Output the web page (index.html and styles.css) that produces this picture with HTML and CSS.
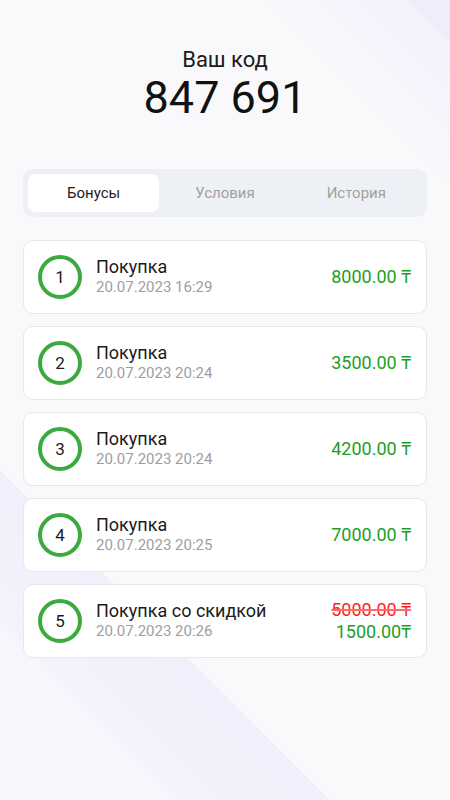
FILE: index.html
```html
<!DOCTYPE html>
<html lang="ru">
<head>
<meta charset="utf-8">
<title>Ваш код</title>
<link rel="stylesheet" href="styles.css">
</head>
<body>
<div class="page">
  <header class="header">
    <div class="header-label">Ваш код</div>
    <div class="header-code">847 691</div>
  </header>

  <nav class="tabs">
    <div class="tab tab-active">Бонусы</div>
    <div class="tab">Условия</div>
    <div class="tab">История</div>
  </nav>

  <ul class="list">
    <li class="card">
      <div class="badge">1</div>
      <div class="info">
        <div class="title">Покупка</div>
        <div class="date">20.07.2023 16:29</div>
      </div>
      <div class="amounts"><div class="amount">8000.00 ₸</div></div>
    </li>
    <li class="card">
      <div class="badge">2</div>
      <div class="info">
        <div class="title">Покупка</div>
        <div class="date">20.07.2023 20:24</div>
      </div>
      <div class="amounts"><div class="amount">3500.00 ₸</div></div>
    </li>
    <li class="card">
      <div class="badge">3</div>
      <div class="info">
        <div class="title">Покупка</div>
        <div class="date">20.07.2023 20:24</div>
      </div>
      <div class="amounts"><div class="amount">4200.00 ₸</div></div>
    </li>
    <li class="card">
      <div class="badge">4</div>
      <div class="info">
        <div class="title">Покупка</div>
        <div class="date">20.07.2023 20:25</div>
      </div>
      <div class="amounts"><div class="amount">7000.00 ₸</div></div>
    </li>
    <li class="card">
      <div class="badge">5</div>
      <div class="info">
        <div class="title">Покупка со скидкой</div>
        <div class="date">20.07.2023 20:26</div>
      </div>
      <div class="amounts amounts-double">
        <div class="amount amount-old">5000.00 ₸</div>
        <div class="amount">1500.00₸</div>
      </div>
    </li>
  </ul>
</div>
</body>
</html>
```

FILE: styles.css
```css
* {
  box-sizing: border-box;
}

html, body {
  margin: 0;
  padding: 0;
}

body {
  min-height: 100vh;
  font-family: Roboto, "Noto Sans", "DejaVu Sans", sans-serif;
  color: #1b1b1b;
  background-color: #f9f9fc;
  background-image: linear-gradient(45deg,
    #f8f8fc 0px,
    #f6f6fc 127px,
    #f4f3fc 127px,
    #f0effb 233px,
    #f9f9fc 233px,
    #f9f9fc 754px,
    #f8f8fc 754px,
    #f3f2fc 854px,
    #efecfc 854px,
    #efecfc 900px);
}

.page {
  padding: 48px 23px 0 23px;
}

.header {
  display: flex;
  flex-direction: column;
  align-items: center;
}

.header-label {
  font-size: 22px;
  line-height: 24px;
  color: #1b1b1b;
}

.header-code {
  font-size: 45px;
  line-height: 52px;
  color: #111;
}

.tabs {
  margin-top: 45px;
  display: grid;
  grid-template-columns: repeat(3, 1fr);
  padding: 5px;
  background: #edf1f5;
  border-radius: 10px;
}

.tab {
  height: 38px;
  display: flex;
  align-items: center;
  justify-content: center;
  font-size: 15px;
  color: #a0a0a0;
  border-radius: 8px;
}

.tab-active {
  background: #ffffff;
  color: #1b1b1b;
}

.list {
  list-style: none;
  margin: 23px 0 0 0;
  padding: 0;
  display: flex;
  flex-direction: column;
  gap: 12px;
}

.card {
  display: flex;
  align-items: center;
  height: 74px;
  padding: 0 15px 0 14px;
  background: #ffffff;
  border: 1px solid #e7e7ec;
  border-radius: 10px;
}

.badge {
  flex: none;
  width: 44px;
  height: 44px;
  border: 4px solid #3caa3f;
  border-radius: 50%;
  display: flex;
  align-items: center;
  justify-content: center;
  font-size: 17px;
  color: #1b1b1b;
  margin-right: 14px;
}

.info {
  flex: 1;
  display: flex;
  flex-direction: column;
}

.title {
  font-size: 18px;
  line-height: 20px;
  color: #1b1b1b;
}

.date {
  font-size: 15px;
  line-height: 21px;
  color: #9e9e9e;
}

.amounts {
  display: flex;
  flex-direction: column;
  align-items: flex-end;
}

.amount {
  font-size: 18px;
  line-height: 22px;
  color: #1c9f1f;
}

.amount-old {
  color: #ff1f1f;
  text-decoration: line-through;
  text-decoration-color: #ff6b6b;
  text-decoration-thickness: 2px;
}
```
